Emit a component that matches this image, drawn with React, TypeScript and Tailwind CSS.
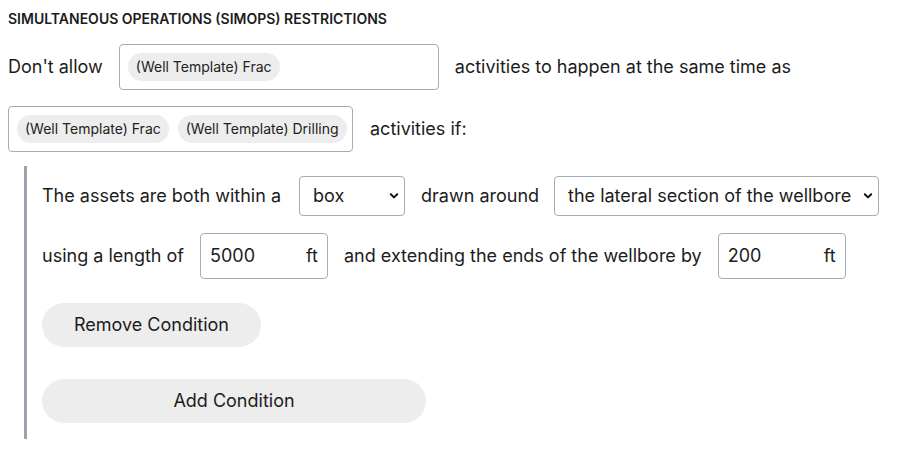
import React from "react";

const Chip = ({ children }: { children: React.ReactNode }) => (
  <span className="inline-flex h-[28px] shrink-0 items-center whitespace-nowrap rounded-full bg-[#ededed] px-[8px] text-[14px] text-[#222]">
    {children}
  </span>
);

const Chevron = () => (
  <svg width="10" height="10" viewBox="0 0 10 10" className="pointer-events-none absolute right-[5px] top-1/2 -translate-y-1/2">
    <path d="M1.8 3.2 L5 6.4 L8.2 3.2" fill="none" stroke="#111" strokeWidth="2" strokeLinecap="round" strokeLinejoin="round" />
  </svg>
);

const Select = ({ value, width }: { value: string; width: string }) => (
  <div className={`relative flex h-[40px] shrink-0 items-center whitespace-nowrap rounded-[4px] border border-[#a3abb9] bg-white pl-[13px] ${width}`}>
    <span>{value}</span>
    <Chevron />
  </div>
);

const FtInput = ({ value }: { value: string }) => (
  <div className="flex h-[46px] w-[128px] shrink-0 items-center justify-between rounded-[4px] border border-[#a3abb9] bg-white px-[9px]">
    <span>{value}</span>
    <span>ft</span>
  </div>
);

export default function App() {
  return (
    <div
      className="min-h-[449px] w-[915px] whitespace-nowrap bg-white px-[8px] pt-[10px] text-[18px] leading-[24px] text-[#1c1c1c]"
      style={{ fontFamily: "Inter, 'Noto Sans', sans-serif" }}
    >
      <div className="text-[14px] font-semibold leading-[17px]">
        SIMULTANEOUS OPERATIONS (SIMOPS) RESTRICTIONS
      </div>

      <div className="mt-[17px] flex items-center gap-[16px]">
        <span>Don't allow</span>
        <div className="flex h-[46px] w-[320px] items-center rounded-[4px] border border-[#a3abb9] px-[8px]">
          <Chip>(Well Template) Frac</Chip>
        </div>
        <span>activities to happen at the same time as</span>
      </div>

      <div className="mt-[16px] flex items-center gap-[17px]">
        <div className="flex h-[46px] w-[345px] items-center gap-[9px] rounded-[4px] border border-[#a3abb9] px-[8px]">
          <Chip>(Well Template) Frac</Chip>
          <Chip>(Well Template) Drilling</Chip>
        </div>
        <span>activities if:</span>
      </div>

      <div className="ml-[16px] mt-[14px] border-l-[3px] border-[#9ca3af] pb-[16px] pl-[15px] pt-[10px]">
        <div className="flex items-center gap-[16px]">
          <span>The assets are both within a</span>
          <div className="ml-[2px]">
            <Select value="box" width="w-[106px]" />
          </div>
          <span>drawn around</span>
          <div className="-ml-[1px]">
            <Select value="the lateral section of the wellbore" width="w-[325px]" />
          </div>
        </div>

        <div className="mt-[17px] flex items-center gap-[16px]">
          <span>using a length of</span>
          <FtInput value="5000" />
          <span>and extending the ends of the wellbore by</span>
          <FtInput value="200" />
        </div>

        <div className="mt-[24px]">
          <button className="h-[44px] w-[219px] rounded-full bg-[#ededed] text-[18px] text-[#1c1c1c]">
            Remove Condition
          </button>
        </div>

        <div className="mt-[32px]">
          <button className="h-[44px] w-[384px] rounded-full bg-[#ededed] text-[18px] text-[#1c1c1c]">
            Add Condition
          </button>
        </div>
      </div>
    </div>
  );
}
